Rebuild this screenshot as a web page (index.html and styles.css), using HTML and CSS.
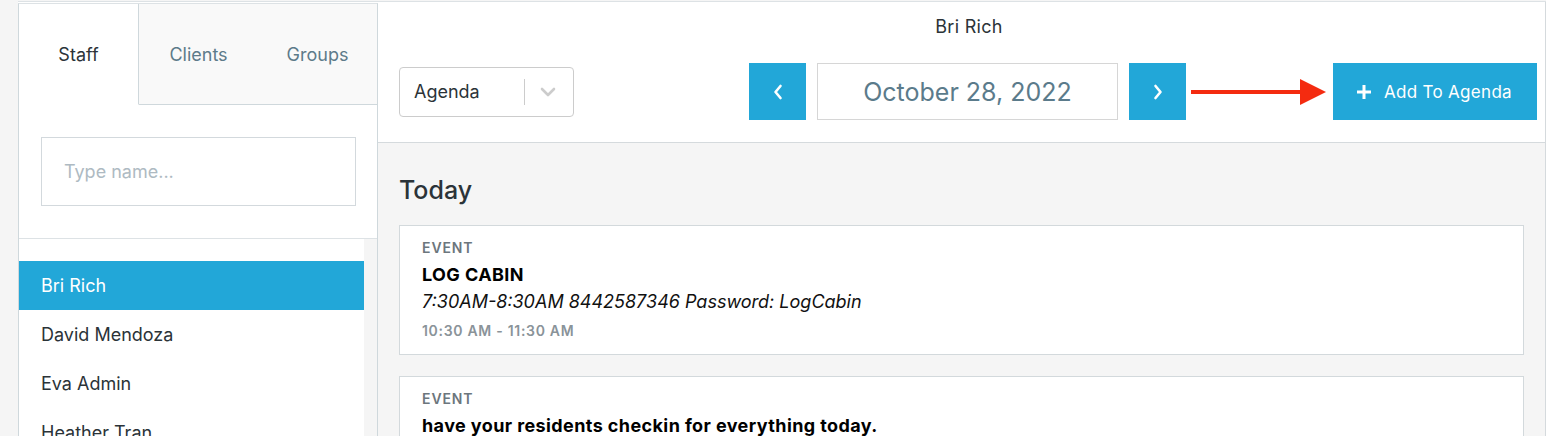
FILE: index.html
```html
<!DOCTYPE html>
<html lang="en">
<head>
<meta charset="utf-8">
<title>Agenda</title>
<link rel="stylesheet" href="styles.css">
</head>
<body>
<div class="app">
  <aside class="sidebar">
    <div class="tabs">
      <div class="tab tab-active">Staff</div>
      <div class="tab">Clients</div>
      <div class="tab">Groups</div>
    </div>
    <div class="search">
      <input class="search-input" type="text" placeholder="Type name...">
    </div>
    <div class="list-wrap">
      <ul class="list">
        <li class="list-item list-item-active">Bri Rich</li>
        <li class="list-item">David Mendoza</li>
        <li class="list-item">Eva Admin</li>
        <li class="list-item">Heather Tran</li>
      </ul>
      <div class="scroll-gutter"></div>
    </div>
  </aside>
  <main class="main">
    <header class="header">
      <div class="title">Bri Rich</div>
      <div class="controls">
        <div class="select">
          <span class="select-value">Agenda</span>
          <span class="select-sep"></span>
          <svg class="select-chevron" width="16" height="10" viewBox="0 0 16 10"><path d="M2 2 L8 8 L14 2" fill="none" stroke="#cccccc" stroke-width="2.6" stroke-linecap="round" stroke-linejoin="round"/></svg>
        </div>
        <div class="right-group">
          <button class="nav-btn" type="button" aria-label="Previous day">
            <svg width="10" height="16" viewBox="0 0 10 16"><path d="M7.5 2 L2.5 8 L7.5 14" fill="none" stroke="#fff" stroke-width="2.6" stroke-linecap="round" stroke-linejoin="round"/></svg>
          </button>
          <div class="date-box">October 28, 2022</div>
          <button class="nav-btn" type="button" aria-label="Next day">
            <svg width="10" height="16" viewBox="0 0 10 16"><path d="M2.5 2 L7.5 8 L2.5 14" fill="none" stroke="#fff" stroke-width="2.6" stroke-linecap="round" stroke-linejoin="round"/></svg>
          </button>
          <svg class="red-arrow" width="135" height="26" viewBox="0 0 135 26"><rect x="0" y="11" width="112" height="4" fill="#f42b10"/><path d="M109 0 L135 13 L109 26 Z" fill="#f42b10"/></svg>
          <button class="add-btn" type="button">
            <svg width="16" height="16" viewBox="0 0 16 16"><path d="M8 1 V15 M1 8 H15" stroke="#fff" stroke-width="3"/></svg>
            <span>Add To Agenda</span>
          </button>
        </div>
      </div>
    </header>
    <section class="content">
      <h2 class="day-title">Today</h2>
      <div class="card">
        <div class="card-type">EVENT</div>
        <div class="card-title">LOG CABIN</div>
        <div class="card-desc">7:30AM-8:30AM 8442587346 Password: LogCabin</div>
        <div class="card-time">10:30 AM - 11:30 AM</div>
      </div>
      <div class="card">
        <div class="card-type">EVENT</div>
        <div class="card-title">have your residents checkin for everything today.</div>
      </div>
    </section>
  </main>
</div>
</body>
</html>
```
FILE: styles.css
```css
* { box-sizing: border-box; }
html, body { margin: 0; padding: 0; }
body {
  background: #f5f5f5;
  font-family: Inter, "Noto Sans", "Liberation Sans", sans-serif;
  color: #2b3338;
  overflow: hidden;
}
.app {
  display: flex;
  margin: 1px 0 0 18px;
  border-top: 1px solid #dde2e5;
  background: #fff;
  height: 440px;
}
.sidebar {
  width: 360px;
  flex: none;
  margin-top: 1px;
  border-top: 1px solid #dde2e5;
  border-left: 1px solid #cfd8dc;
  border-right: 1px solid #cfd8dc;
  display: flex;
  flex-direction: column;
}
.tabs { display: flex; height: 101px; flex: none; }
.tab {
  flex: 1;
  display: flex;
  align-items: center;
  justify-content: center;
  font-size: 18px;
  color: #5d7b8a;
  background: #f9f9f9;
  border-bottom: 1px solid #cfd8dc;
}
.tab-active {
  background: #fff;
  color: #2b3338;
  border-bottom-color: #fff;
  border-right: 1px solid #cfd8dc;
}
.search {
  flex: none;
  padding: 32px 21px 32px 22px;
  border-bottom: 1px solid #dde2e5;
}
.search-input {
  display: block;
  width: 315px;
  height: 69px;
  border: 1px solid #d3d9dd;
  padding: 0 22px;
  font-family: inherit;
  font-size: 18px;
  color: #2b3338;
  outline: none;
}
.search-input::placeholder { color: #aebac2; }
.list-wrap { display: flex; flex: 1; }
.list {
  list-style: none;
  margin: 0;
  padding: 22px 0 0;
  width: 345px;
  background: #fff;
}
.scroll-gutter { flex: 1; background: #f5f5f5; }
.list-item {
  height: 49px;
  line-height: 49px;
  padding-left: 22px;
  font-size: 18px;
  color: #2b3338;
}
.list-item-active { background: #22a7d8; color: #fff; }

.main {
  flex: 1;
  display: flex;
  flex-direction: column;
  border-right: 1px solid #d5dadd;
}
.header {
  flex: none;
  padding: 13px 8px 22px 21px;
  border-bottom: 1px solid #d5dadd;
  background: #fff;
}
.title {
  text-align: center;
  font-size: 18px;
  line-height: 24px;
  letter-spacing: 0.3px;
  padding-left: 2px;
  margin-bottom: 24px;
  color: #2b3338;
}
.controls {
  display: flex;
  align-items: center;
  justify-content: space-between;
  height: 57px;
}
.select {
  width: 175px;
  height: 50px;
  border: 1px solid #cccccc;
  border-radius: 4px;
  display: flex;
  align-items: center;
  padding-left: 14px;
}
.select-value { font-size: 18px; color: #2b3338; width: 110px; }
.select-sep { width: 1px; height: 26px; background: #cccccc; }
.select-chevron { margin-left: 15px; }
.right-group { display: flex; align-items: center; }
.nav-btn {
  width: 57px;
  height: 57px;
  border: none;
  padding: 0;
  background: #22a7d8;
  display: flex;
  align-items: center;
  justify-content: center;
}
.date-box {
  width: 301px;
  height: 57px;
  margin: 0 11px;
  border: 1px solid #d6d6d6;
  display: flex;
  align-items: center;
  justify-content: center;
  font-size: 25px;
  color: #5b7b8b;
}
.red-arrow { margin: 0 7px 0 5px; display: block; }
.add-btn {
  width: 204px;
  height: 57px;
  border: none;
  background: #22a7d8;
  color: #fff;
  font-family: inherit;
  font-size: 17px;
  letter-spacing: 0.3px;
  display: flex;
  align-items: center;
  justify-content: center;
  gap: 12px;
  padding: 0 2px 0 0;
}
.content {
  flex: 1;
  background: #f5f5f5;
  padding: 32px 21px 0 21px;
}
.day-title {
  margin: 0 0 20px;
  font-size: 25px;
  line-height: 30px;
  font-weight: 500;
  color: #2b3338;
}
.card {
  background: #fff;
  border: 1px solid #d3d9dc;
  padding: 13px 22px 13px;
  margin-bottom: 21px;
}
.card-type {
  font-size: 14px;
  line-height: 18px;
  font-weight: 600;
  letter-spacing: 0.9px;
  color: #6c767d;
}
.card-title {
  margin-top: 6px;
  font-size: 18px;
  line-height: 24px;
  font-weight: 700;
  letter-spacing: 0.4px;
  color: #000;
}
.card-desc {
  margin-top: 3px;
  font-size: 18px;
  line-height: 24px;
  font-style: italic;
  color: #111;
}
.card-time {
  margin-top: 7px;
  font-size: 14px;
  line-height: 20px;
  font-weight: 600;
  letter-spacing: 0.7px;
  color: #8a9399;
}
```
